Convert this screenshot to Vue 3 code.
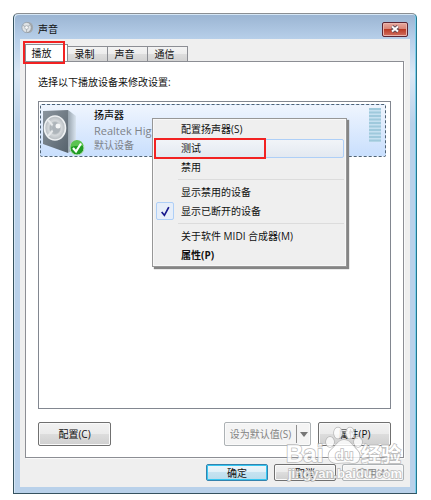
<script setup>
import { ref } from "vue";

const tabs = ["播放", "录制", "声音", "通信"];
const activeTab = ref("播放");
const checked = ref(true);

const menuGroups = [
    [
        { label: "配置扬声器(S)" },
        { label: "测试", hot: true },
        { label: "禁用" },
    ],
    [
        { label: "显示禁用的设备" },
        { label: "显示已断开的设备", check: true },
    ],
    [
        { label: "关于软件 MIDI 合成器(M)" },
        { label: "属性(P)", bold: true },
    ],
];

const pick = (item) => {
    if (item.check) {
        checked.value = !checked.value;
    }
};
</script>

<template>
    <div class="window">
        <header class="titlebar">
            <svg class="title-icon" viewBox="0 0 14 14">
                <ellipse cx="8" cy="7" rx="5" ry="6" fill="#a3a9ae" />
                <ellipse cx="6" cy="7" rx="5" ry="5.5" fill="#dfe3e6" stroke="#8b939b" stroke-width="0.7" />
                <path d="M6 7 2 4.500M6 7l4-3M6 7v5" stroke="#a5acb2" stroke-width="1" />
                <circle cx="6" cy="7" r="2" fill="#f7f8f9" stroke="#8f989f" stroke-width="0.6" />
            </svg>
            <span class="title">声音</span>
            <button class="close" aria-label="关闭">
                <svg viewBox="0 0 10 8">
                    <path d="M2 1.500 8 6.500M8 1.500 2 6.500" stroke="#5d4b56" stroke-width="3.600" />
                    <path d="M2 1.500 8 6.500M8 1.500 2 6.500" stroke="#fff" stroke-width="2" />
                </svg>
            </button>
        </header>

        <main class="client">
            <nav class="tabs">
                <button
                    v-for="tab in tabs"
                    :key="tab"
                    :class="['tab', tab === activeTab ? 'active' : '']"
                    @click="activeTab = tab"
                >
                    {{ tab }}
                </button>
            </nav>

            <section class="panel">
                <p class="hint">选择以下播放设备来修改设置:</p>

                <div class="devices">
                    <div class="device">
                        <svg class="speaker" viewBox="0 0 44 48">
                            <defs>
                                <linearGradient id="box" x1="0" y1="0" x2="1" y2="1">
                                    <stop offset="0" stop-color="#8b959e" />
                                    <stop offset="1" stop-color="#56626c" />
                                </linearGradient>
                                <linearGradient id="side" x1="0" y1="0" x2="1" y2="0">
                                    <stop offset="0" stop-color="#98a4ae" />
                                    <stop offset="1" stop-color="#d9e4ef" />
                                </linearGradient>
                                <radialGradient id="cone">
                                    <stop offset="0" stop-color="#c8cdd1" />
                                    <stop offset="0.450" stop-color="#aeb5ba" />
                                    <stop offset="0.600" stop-color="#d5d9dc" />
                                    <stop offset="1" stop-color="#b4babf" />
                                </radialGradient>
                            </defs>
                            <path d="M25 2 33 8v32l-8 5z" fill="url(#side)" />
                            <path d="M0 3 25 2v43L0 36z" fill="url(#box)" />
                            <ellipse cx="12" cy="20" rx="10.500" ry="12" fill="url(#cone)" stroke="#eef1f3" stroke-width="1.600" />
                            <path d="M12 20 5 12M12 20 5 28" stroke="#e7eaec" stroke-width="2" />
                            <ellipse cx="13" cy="20" rx="4" ry="5" fill="#adb4ba" />
                            <circle cx="15" cy="18" r="2.500" fill="#f4f6f7" />
                            <circle cx="34" cy="40" r="7" fill="#1f9c23" stroke="#bfe2bf" />
                            <path d="M27.500 39a6.500 6.500 0 0 1 13-1q-6-1-13 1z" fill="#5cc352" />
                            <path d="m30 40 3 3.500 5-8" fill="none" stroke="#fff" stroke-width="2.200" />
                        </svg>
                        <div class="device-text">
                            <strong>扬声器</strong>
                            <span class="model">Realtek Hig</span>
                            <span>默认设备</span>
                        </div>
                        <svg class="meter" viewBox="0 0 12 34">
                            <rect width="12" height="34" fill="#c6e0f0" />
                            <path
                                d="M0 1h12M0 4.500h12M0 8h12M0 11.500h12M0 15h12M0 18.500h12M0 22h12M0 25.500h12M0 29h12M0 32.500h12"
                                stroke="#9fc9dc"
                                stroke-width="2"
                            />
                        </svg>
                    </div>

                    <div class="menu" role="menu">
                        <div v-for="(group, i) in menuGroups" :key="i" class="menu-group">
                            <button
                                v-for="item in group"
                                :key="item.label"
                                :class="['menu-item', { hot: item.hot, bold: item.bold }]"
                                role="menuitem"
                                @click="pick(item)"
                            >
                                <span :class="['mark', item.check && checked ? 'on' : '']">
                                    <svg v-if="item.check && checked" viewBox="0 0 10 10">
                                        <path d="M1.500 5.500 4 8.500 8 1" fill="none" stroke="#16168c" stroke-width="1.500" />
                                    </svg>
                                </span>
                                {{ item.label }}
                            </button>
                        </div>
                    </div>
                </div>

                <div class="actions">
                    <button class="btn wide">配置(C)</button>
                    <button class="btn split" disabled>
                        <span>设为默认值(S)</span>
                        <i class="arrow"></i>
                    </button>
                    <button class="btn wide">属性(P)</button>
                </div>
            </section>

            <footer class="footer">
                <button class="btn primary">确定</button>
                <button class="btn">取消</button>
                <button class="btn" disabled>应用(A)</button>
            </footer>
        </main>

        <svg class="watermark" viewBox="0 0 124 60">
            <g>
                <ellipse cx="47" cy="17" rx="4" ry="5" />
                <ellipse cx="55" cy="8" rx="4" ry="5.500" />
                <ellipse cx="67" cy="8" rx="4" ry="5.500" />
                <ellipse cx="75" cy="17" rx="4" ry="5" />
                <path d="M61 15c-6 0-8 6-12 9-6 5-4 14 4 14 5 0 11-1 16 0 8 1 10-8 5-13-5-5-7-10-13-10z" />
            </g>
            <text class="big" x="3" y="37">Bai</text>
            <text class="du" x="52" y="35">du</text>
            <text class="cjk" x="78" y="37">经验</text>
            <text class="url" x="5" y="53">jingyan.baidu.com</text>
        </svg>
    </div>
</template>

<style>
body {
    background: #fff;
}
</style>

<style scoped>
.window {
    position: relative;
    box-sizing: border-box;
    margin: 13px 14px 7px 13px;
    padding: 0 6px 6px;
    border: 1px solid #35525f;
    border-top-color: #8b8f93;
    border-right-color: #24778f;
    border-radius: 5px 5px 0 0;
    background: linear-gradient(#9ab4d2, #b8d0ea 26px, #dbe8f5 60px, #b9d1ea 110px);
    box-shadow: inset 1px 1px #d5e6f5, inset -1px 0 #7dcdeb;
    color: #111;
    font: 10px/14px "Open Sans", "Noto Sans CJK SC", sans-serif;
}

button {
    margin: 0;
    padding: 0;
    color: inherit;
    font: inherit;
    white-space: nowrap;
}

.titlebar {
    display: flex;
    align-items: center;
    height: 25px;
    padding: 1px 2px 0 1px;
    box-sizing: border-box;
}

.title-icon {
    width: 13px;
    height: 13px;
}

.title {
    flex: 1;
    margin-left: 4px;
    padding-top: 3px;
}

.close {
    display: flex;
    align-items: center;
    justify-content: center;
    width: 26px;
    height: 15px;
    margin-top: 4px;
    border: 1px solid #5c2634;
    border-radius: 2px;
    background: linear-gradient(#e8aaa0, #d98678 45%, #bb3b25 50%, #d07060);
    box-shadow: inset 0 0 0 1px #eab5ac;
}

.close svg {
    width: 10px;
    height: 8px;
}

.client {
    padding: 5px 6px 6px 5px;
    background: #efefef;
}

.tabs {
    display: flex;
    align-items: flex-end;
    height: 17px;
}

.tab {
    box-sizing: border-box;
    width: 40px;
    height: 15px;
    padding-right: 6px;
    border: 1px solid #8c8e94;
    border-width: 1px 1px 0 0;
    background: linear-gradient(#f3f3f3, #ececec 50%, #dddddd 52%, #d2d2d2);
    line-height: 15px;
}

.tab.active {
    position: relative;
    width: 43px;
    height: 17px;
    padding-right: 10px;
    border-left-width: 1px;
    background: #fff;
}

/* red callout around the selected tab */
.tab.active::after {
    content: "";
    position: absolute;
    inset: -4px 2px -3px -3px;
    border: 2px solid #f22222;
}

.panel {
    padding: 12px 12px 11px;
    border: 1px solid #8c8e94;
    background: #fff;
    box-shadow: 1px 1px #fafafa;
}

.hint {
    margin: 1px 0 12px;
}

.devices {
    position: relative;
    box-sizing: border-box;
    height: 308px;
    padding: 2px 4px 2px 1px;
    border: 1px solid #828790;
}

.device {
    display: flex;
    box-sizing: border-box;
    height: 53px;
    padding: 3px 4px 0 2px;
    border: 1px dashed #4f6375;
    border-radius: 2px;
    background: linear-gradient(#eff5fe, #c9dffd);
}

.speaker {
    width: 44px;
    height: 48px;
}

.device-text {
    display: flex;
    flex: 1;
    flex-direction: column;
    margin-left: 7px;
    color: #7d8289;
    line-height: 15px;
}

.device-text strong {
    color: #111;
    font-weight: 500;
}

.model {
    font-size: 11px;
}

.meter {
    width: 12px;
    height: 34px;
}

.menu {
    position: absolute;
    top: 16px;
    left: 113px;
    width: 195px;
    box-sizing: border-box;
    padding: 1px 2px;
    border: 1px solid #979797;
    background: #efefef;
    box-shadow: inset 0 0 0 1px #f8f8f8, 2px 2px 1px #858585;
}

.menu-group + .menu-group {
    padding-top: 3px;
    margin-top: 2px;
    border-top: 1px solid #e0e0e0;
    border-image: linear-gradient(90deg, transparent 24px, #dcdcdc 24px) 1;
}

.menu-item {
    display: flex;
    position: relative;
    box-sizing: border-box;
    align-items: center;
    width: 100%;
    height: 19px;
    padding-bottom: 1px;
    border: 1px solid transparent;
    border-radius: 2px;
    background: none;
    text-align: left;
}

.menu-item.hot {
    border-color: #aecff7;
    background: linear-gradient(#f1f4f8, #e3e9f1);
}

/* red callout around the hovered entry */
.menu-item.hot::after {
    content: "";
    position: absolute;
    inset: -2px 77px -2px -2px;
    border: 2px solid #f22222;
}

.menu-item.bold {
    font-weight: 700;
}

.mark {
    display: flex;
    box-sizing: border-box;
    align-items: center;
    justify-content: center;
    width: 18px;
    height: 18px;
    margin-right: 7px;
    border: 1px solid transparent;
    border-radius: 2px;
}

.mark.on {
    border-color: #aecff7;
    background: #e6eef9;
}

.mark svg {
    width: 11px;
    height: 11px;
}

.actions {
    display: flex;
    gap: 7px;
    margin-top: 13px;
}

.btn {
    box-sizing: border-box;
    width: 62px;
    height: 17px;
    border: 1px solid #707070;
    border-radius: 2px;
    background: linear-gradient(#f2f2f2, #ebebeb 48%, #dddddd 50%, #cfcfcf);
    box-shadow: inset 0 0 0 1px #fafafa;
    line-height: 14px;
}

.btn:disabled {
    border-color: #adb2b5;
    background: #f4f4f4;
    color: #838383;
}

.btn.wide {
    width: 73px;
    height: 24px;
}

.btn.split {
    display: flex;
    align-items: center;
    width: 87px;
    height: 24px;
    margin-left: auto;
}

.split span {
    flex: 1;
}

.split .arrow {
    display: flex;
    align-items: center;
    justify-content: center;
    width: 13px;
    height: 18px;
    border-left: 1px solid #8f8f8f;
}

.arrow::before {
    content: "";
    border: 4px solid transparent;
    border-top: 5px solid #777;
    border-bottom: 0;
}

.btn.primary {
    border-color: #3483ad;
    background: linear-gradient(#eef6fa, #e0f0f8 48%, #c6e3f1 50%, #b9dcec);
    box-shadow: inset 0 0 0 1px #35c7f2;
}

.footer {
    display: flex;
    justify-content: flex-end;
    gap: 6px;
    margin-top: 6px;
}

.watermark {
    position: absolute;
    right: 9px;
    bottom: 8px;
    width: 124px;
    height: 60px;
    fill: #fff;
    stroke: #adadad;
    stroke-width: 1.5px;
    paint-order: stroke;
    opacity: 0.8;
    pointer-events: none;
}

.big {
    font: 700 24px "Liberation Sans", sans-serif;
}

.du {
    font: 700 15px "Liberation Sans", sans-serif;
}

.cjk {
    font: 700 20px "Noto Sans CJK SC", sans-serif;
}

.url {
    font: 700 13px "Liberation Sans", sans-serif;
}
</style>
